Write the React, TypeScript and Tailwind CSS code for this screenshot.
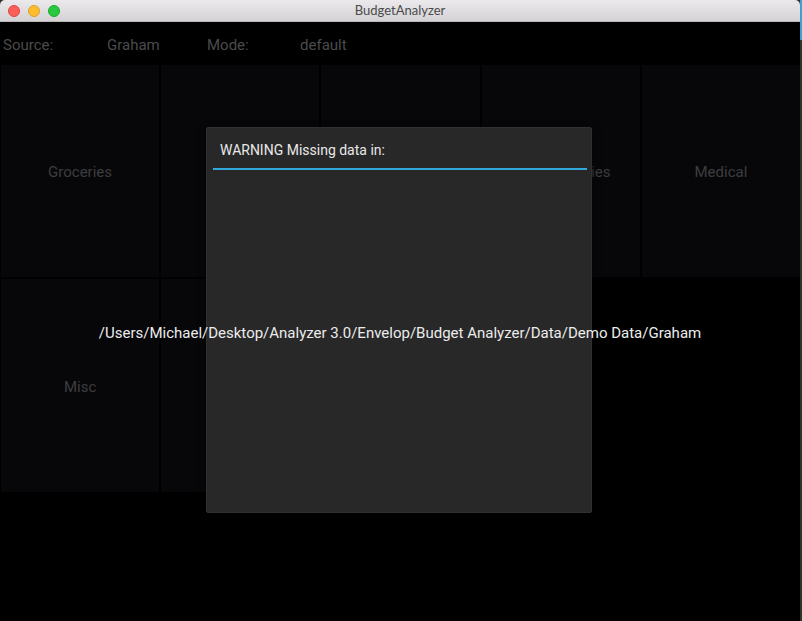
import React from "react";

const row1 = ["Groceries", "Dining", "Household", "Office Supplies", "Medical"];
const row2 = ["Misc", "Travel"];

function TitleBar() {
  return (
    <div className="relative h-[22px] rounded-t-[5px] bg-gradient-to-b from-[#ebe9eb] to-[#d4d2d4] border-b border-[#b9b7b9] flex items-center">
      <div className="flex gap-[8px] pl-[8px]">
        <span className="w-[12px] h-[12px] rounded-full bg-[#fc5f57] border border-[#e0443e]" />
        <span className="w-[12px] h-[12px] rounded-full bg-[#fdbc2e] border border-[#dea123]" />
        <span className="w-[12px] h-[12px] rounded-full bg-[#28c840] border border-[#1aab29]" />
      </div>
      <div className="absolute inset-0 pt-[1px] flex items-center justify-center text-[13px] text-[#4a4a4a] font-['Lato','Liberation_Sans',sans-serif]">
        BudgetAnalyzer
      </div>
    </div>
  );
}

function Cell({ label }: { label: string }) {
  return (
    <div className="bg-[#070709] pt-[3px] flex items-center justify-center text-[15px] text-[#3d3d3f]">
      {label}
    </div>
  );
}

export default function App() {
  return (
    <div className="w-[802px] h-[621px] flex bg-[#2b3222] font-['Roboto',sans-serif]">
      <div className="w-[800px] h-full flex flex-col">
        <TitleBar />
        <div className="relative flex-1 bg-black">
          <div className="h-[43px] pt-[3px] flex items-center pl-[3px] text-[15px] text-[#4b4b4b]">
            <span className="w-[104px]">Source:</span>
            <span className="w-[100px]">Graham</span>
            <span className="w-[93px]">Mode:</span>
            <span>default</span>
          </div>
          <div className="grid grid-cols-5 grid-rows-[212px_213px] gap-[2px] pl-[1px]">
            {row1.map((l) => (
              <Cell key={l} label={l} />
            ))}
            {row2.map((l) => (
              <Cell key={l} label={l} />
            ))}
          </div>

          <div className="absolute left-[206px] top-[105px] w-[386px] h-[386px] bg-[#282828] rounded-[2px] border border-[#303030] shadow-[0_2px_8px_rgba(0,0,0,0.6)]">
            <div className="pl-[13px] pt-[12px] h-[40px] text-[14px] text-[#e8e8e8]">
              WARNING Missing data in:
            </div>
            <div className="ml-[6px] mr-[4px] h-[2px] bg-[#33a8d8]" />
          </div>

          <div className="absolute left-0 right-0 top-[300px] text-center text-[15px] text-[#ececec]">
            /Users/Michael/Desktop/Analyzer 3.0/Envelop/Budget Analyzer/Data/Demo Data/Graham
          </div>
        </div>
      </div>
      <div className="w-[2px] h-full bg-[linear-gradient(to_bottom,#3aa0d0_0,#3aa0d0_40px,#2e3525_40px)]" />
    </div>
  );
}
